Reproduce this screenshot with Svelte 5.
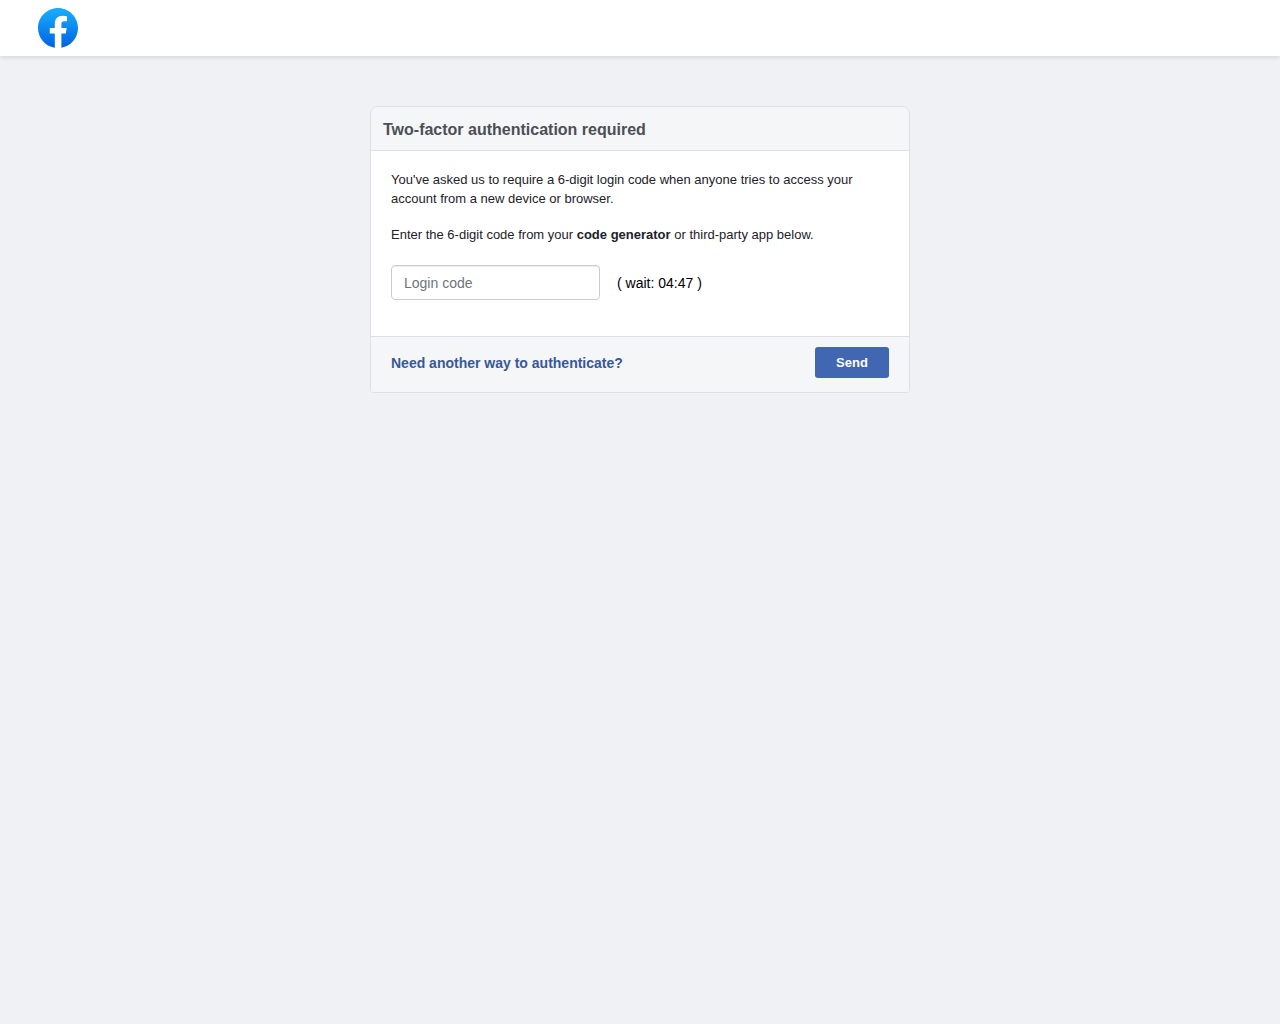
<script>
  const wait = '04:47';
</script>

<header class="topbar">
  <a class="logo" href="#home" aria-label="Facebook">
    <svg viewBox="0 0 40 40" width="40" height="40" aria-hidden="true">
      <defs>
        <linearGradient id="disc" x1="0" y1="0" x2="0" y2="1">
          <stop offset="0" stop-color="#19afff" />
          <stop offset="1" stop-color="#0062e0" />
        </linearGradient>
      </defs>
      <path fill="url(#disc)" d="M16.7 39.8C7.2 38.1 0 29.9 0 20 0 9 9 0 20 0s20 9 20 20c0 9.900-7.200 18.100-16.700 19.800l-1.100-.9h-4.400z" />
      <path fill="#fff" d="m27.800 25.600.9-5.600h-5.300v-3.900c0-1.600.6-2.800 3-2.800H29V8.200c-1.400-.2-3-.4-4.400-.4-4.600 0-7.800 2.800-7.800 7.800V20h-5v5.600h5v14.100c1.100.2 2.200.3 3.300.3 1.100 0 2.200-.1 3.300-.3V25.600z" />
    </svg>
  </a>
</header>

<main>
  <form class="card" onsubmit={(event) => event.preventDefault()}>
    <h1>Two-factor authentication required</h1>
    <div class="content">
      <p>You've asked us to require a 6-digit login code when anyone tries to access your account from a new device or browser.</p>
      <p>Enter the 6-digit code from your <strong>code generator</strong> or third-party app below.</p>
      <div class="entry">
        <input type="text" placeholder="Login code" aria-label="Login code" autocomplete="off" />
        <span>( wait: {wait} )</span>
      </div>
    </div>
    <div class="actions">
      <a href="#other">Need another way to authenticate?</a>
      <button type="submit">Send</button>
    </div>
  </form>
</main>

<style>
  :global(body) {
    margin: 0;
    background: #f0f1f5;
    font-family: Helvetica, Arial, "Liberation Sans", sans-serif;
  }

  .topbar {
    display: flex;
    align-items: center;
    height: 56px;
    padding: 0 38px;
    background: #fff;
    box-shadow: 0 2px 4px rgba(0, 0, 0, 0.1);
  }

  .logo,
  svg {
    display: block;
  }

  main {
    padding: 50px 16px;
  }

  .card {
    box-sizing: border-box;
    max-width: 540px;
    margin: 0 auto;
    overflow: hidden;
    border: 1px solid #dddfe2;
    border-radius: 8px 8px 4px 4px;
    background: #fff;
  }

  h1 {
    margin: 0;
    padding: 13px 12px 11px;
    border-bottom: 1px solid #dddfe2;
    background: #f5f6f7;
    color: #4b4f56;
    font-size: 16px;
    line-height: 19px;
  }

  .content {
    padding: 19px 20px 36px;
  }

  p {
    margin: 0 0 17px;
    color: #1d2129;
    font-size: 13px;
    line-height: 19px;
  }

  .entry {
    display: flex;
    align-items: center;
    gap: 17px;
    margin-top: 21px;
    color: #000;
    font-size: 14px;
  }

  input {
    box-sizing: border-box;
    width: 209px;
    height: 35px;
    padding: 0 12px;
    border: 1px solid #ccc;
    border-radius: 4px;
    background: #fff;
    box-shadow: inset 0 1px 1px rgba(0, 0, 0, 0.075);
    font: inherit;
  }

  input::placeholder {
    color: #6c757d;
    opacity: 1;
  }

  .actions {
    display: flex;
    align-items: flex-start;
    justify-content: space-between;
    padding: 10px 20px 12px;
    border-top: 1px solid #dddfe2;
    background: #f5f6f7;
  }

  .actions a {
    color: #385898;
    font-size: 14px;
    font-weight: 700;
    line-height: 33px;
    text-decoration: none;
  }

  button {
    width: 74px;
    height: 31px;
    padding: 0;
    border: 0;
    border-radius: 3px;
    background: #4267b2;
    color: #fff;
    font: inherit;
    font-size: 13px;
    font-weight: 700;
    cursor: pointer;
  }
</style>
